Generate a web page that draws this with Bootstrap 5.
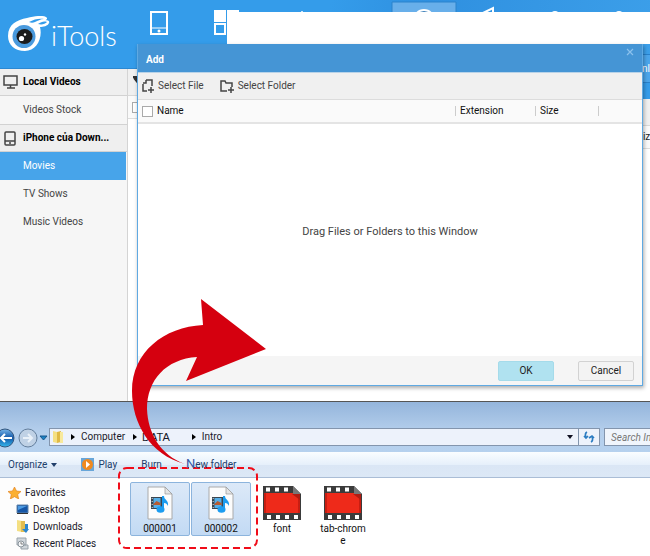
<!DOCTYPE html>
<html lang="en">
<head>
<meta charset="utf-8">
<meta name="viewport" content="width=device-width, initial-scale=1">
<title>iTools</title>
<link href="https://cdn.jsdelivr.net/npm/bootstrap@5.3.0/dist/css/bootstrap.min.css" rel="stylesheet">
<style>
body{font-family:Roboto,"Noto Sans",sans-serif;font-size:10px;line-height:16px;color:#444;background:#fff;overflow:hidden}
svg{display:block;flex:none}
a{color:inherit;text-decoration:none}
button{font:inherit;color:inherit;border:0;background:none;padding:0;white-space:nowrap}
.topbar{height:69px;background:linear-gradient(100deg,#349cea,#349cea 50%,#2f90e0 65%,#3c9fe9);border-bottom:1px solid #2b88d2}
.brand-mark{margin:16px 0 0 8px}
.brand-name{font:300 27px/32px Lato,sans-serif;color:#fff;margin-top:20px}
.cover{position:absolute;left:227px;right:0;top:12px;height:32px;background:#fff}
.side{width:128px;min-height:332px;background:#f6f6f6;border-right:1px solid #d4d4d4}
.side a{display:flex;align-items:center;height:28px;padding-left:23px;white-space:nowrap}
.side .group{background:#efefef;border-bottom:1px solid #d2d2d2;height:27px;padding-left:3px;gap:4px;color:#000;font-weight:700}
.side .group svg{width:16px}
.side .line-above{border-top:1px solid #d2d2d2;height:28px}
.side .current{background:#47a4ea;color:#fff;margin-right:1px}
.band{background:#f0f0f0;height:27px;border-bottom:1px solid #d8d8d8}
.band-head{background:#fafafa;height:23px;border-bottom:1px solid #ddd}
.strip{width:13px;margin-top:-15px;position:relative;white-space:nowrap}
.strip-top{height:45px;background:#349cea;color:#fff}
.strip-top div{height:29px;padding-left:5px;background:#4ba5eb;border:solid #2881cb;border-width:1px 0}
.dialog-box{position:absolute;left:137px;right:7px;top:44px;background:#fff;border:1px solid #5fa9e2;border-top:0;box-shadow:1px 2px 4px #0005}
.dialog-title{height:29px;background:#4595d5;color:#fff;border-bottom:1px solid #b9d3e8}
.dialog-tools{height:27px;background:#f0f0f0;border-bottom:1px solid #dcdcdc}
.dialog-tools button{display:flex;align-items:center;gap:4px}
.dialog-table{width:100%;table-layout:fixed;color:#111}
.dialog-table th{font-weight:400;height:23px;padding:0 0 0 4px;background:#fafafa;border-bottom:2px solid #e4e4e4;position:relative}
.dialog-table th+th::before{content:"";position:absolute;left:-1px;top:6px;height:10px;border-left:1px solid #ccc}
.dialog-table input,.mini-check{appearance:none;width:11px;height:11px;margin:0;border:1px solid #aaa;background:#fff}
.dropzone{min-height:232px;font-size:11px;padding-bottom:16px}
.dialog-foot{height:29px;background:#f5f5f5;padding-right:8px;gap:24px}
.dialog-foot button{width:56px;height:20px;border:1px solid #d2d2d2;border-radius:2px;background:#f3f3f3;color:#222}
.dialog-foot .ok-btn{background:#b0e2f0;border-color:#a5dbea}
.explorer{background:linear-gradient(#94b5dc,#b5cfec 30px,#b6d1ee 50px);border-top:1px solid #555;color:#1a1a2a}
.address-row{padding-top:26px;height:50px}
.address{height:18px;background:#edf2fb;border:1px solid #8395ad;white-space:nowrap}
.folder-name{font:11px/16px "Liberation Sans",sans-serif}
.address-tail{border-left:1px solid #8395ad;width:21px;height:16px}
.search{width:46px;overflow:hidden}
.search input{width:120px;height:18px;border:1px solid #8395ad;background:#f0f5fc;font:italic 10px Roboto,"Noto Sans",sans-serif;padding:0 6px;border-radius:0}
.search input::placeholder{color:#777;opacity:1}
.command{height:26px;background:linear-gradient(#fafdff,#e6f0fb 50%,#dae6f5 51%,#dce8f6);border-bottom:1px solid #aabdd6;color:#22406b}
.new-btn{position:relative;z-index:2}
.new-btn::first-letter{font-size:13px;color:#3557a5}
.files{background:#fff;min-height:79px}
.places{width:120px;background:#fdfdfd;padding:6px 0 0 8px}
.places a{display:flex;align-items:center;gap:4px;height:17px;white-space:nowrap}
.places .child{padding-left:8px}
.file-list{gap:1px;padding:4px 0 0 10px}
.file{width:60px;min-height:54px;padding:0 5px;border:1px solid transparent;text-align:center;line-height:12px;color:#111;overflow-wrap:anywhere;word-break:break-all}
.file svg{margin:3px auto 3px}
.file .film-icon{margin-left:5px}
.picked{border-color:#8cb4dd;border-radius:2px;background:linear-gradient(#dce9f8,#c2daf4)}
.overlay{position:absolute;left:0;top:0;pointer-events:none}
</style>
<script src="https://cdn.jsdelivr.net/npm/bootstrap@5.3.0/dist/js/bootstrap.bundle.min.js"></script>
</head>
<body>
<svg width="0" height="0" class="position-absolute" aria-hidden="true">
 <defs>
 <symbol id="media" viewBox="0 0 26 34"><path d="M1 1h17l7 7v25H1z" fill="#fcfcfc" stroke="#aaa"/><path d="M18 1v7h7z" fill="#e5e5e5" stroke="#999" stroke-width=".7"/><path d="M4 11h12v12H4z" fill="#3a4650"/><path d="M6.500 12h7v10h-7z" fill="#56aee6"/><path d="M6.500 18l3-3 4 2v2h-7z" fill="#b75b31"/><path d="M5.200 12v11" stroke="#ddd" stroke-dasharray="1 2"/><path d="M15 10h2c0 4 5 4 4 10-1-2-2-3-4-3v6h-2z" fill="#1b9cf0"/><ellipse cx="13.500" cy="23.500" rx="4" ry="3.200" fill="#1b9cf0"/></symbol>
 <symbol id="film" viewBox="0 0 38 34"><path d="M0 0h30l8 8v26H0z" fill="#3b3b3b"/><path d="M1 7h36v20H1z" fill="#ee2a1a"/><path d="M1 7h2v20H1zM35 8h2v19h-2z" fill="#c81e12"/><path d="M30 0l8 8h-8z" fill="#777"/><path d="M29 8h8v6z" fill="#b01c12"/><path d="M3 1.500h4v4H3zM12 1.500h4v4h-4zM21 1.500h4v4h-4zM4 29h4v4H4zM13 29h4v4h-4zM22 29h4v4h-4zM31 29h4v4h-4z" fill="#fff"/></symbol>
 </defs>
</svg>
<div class="position-relative">
<header class="topbar position-relative overflow-hidden">
 <div class="d-flex align-items-start">
  <svg width="43" height="36" viewBox="0 0 43 36" class="brand-mark"><path d="M0 20C0 8 9 4 19 2 27 0 34-1 38 1c2 1 1 3-1 3 3 0 5 1 4 3-1 3-6 4-9 4 3 12-4 24-15 24C7 35 0 29 0 20z" fill="#fff"/><circle cx="16" cy="20.500" r="11.500" fill="#4a9add"/><ellipse cx="16.500" cy="20.500" rx="8" ry="7.500" fill="#1b1b1b"/><circle cx="13.500" cy="22.500" r="2.600" fill="#fff"/><circle cx="17" cy="18.500" r="1.200" fill="#fff"/><path d="M21 6c5-3 11-4 15-3-4 0-6 2-9 3-2 1-4 1-6 0zM30 8c3-2 6-3 9-2-2 2-5 3-9 2z" fill="#349cea"/></svg>
  <span class="brand-name">iTools</span>
 </div>
 <svg class="overlay" width="650" height="68" viewBox="0 0 650 68"><g fill="none" stroke="#fff" stroke-width="2"><rect x="151" y="12" width="16" height="22"/><path d="M151 28h16" stroke-width="1"/><rect x="215" y="24" width="10" height="10"/></g><circle cx="159" cy="31" r="1.500" fill="#fff"/><path d="M214 10h12v12h-12zM227 10h12v3h-12z" fill="#fff"/><path d="M392 2h64v42h-64z" fill="#68afea" stroke="#2b83cc"/><circle cx="424" cy="20" r="10" fill="#3b7eb8" stroke="#fff" stroke-width="2"/><path d="M483 13l10-5v6" fill="none" stroke="#fff" stroke-width="2"/><circle cx="555" cy="15" r="4" fill="#fff"/><circle cx="619" cy="15" r="4" fill="#fff"/><circle cx="302" cy="12" r="1" fill="#fff"/></svg>
 <div class="cover"></div>
</header>
<div class="d-flex">
 <nav class="side flex-shrink-0" aria-label="Library">
  <a href="#" class="group"><svg height="14" viewBox="0 0 16 14" fill="none" stroke="#444" stroke-width="1.500"><path d="M1 1h13v9H1zM7.500 10v3M4 13h8"/></svg>Local Videos</a>
  <a href="#">Videos Stock</a>
  <a href="#" class="group line-above"><svg height="15" viewBox="0 0 16 15" fill="none" stroke="#444" stroke-width="1.500"><rect x="2" y="1" width="10" height="13" rx="1"/><path d="M2 10h10M6 12h2"/></svg>iPhone của Down...</a>
  <a href="#" class="current">Movies</a>
  <a href="#">TV Shows</a>
  <a href="#">Music Videos</a>
 </nav>
 <main class="flex-grow-1 d-flex justify-content-between">
  <div class="flex-grow-1"><div class="band"><svg width="10" height="20" viewBox="0 0 10 20"><path d="M5 8h5M6 9l4 5M8 8v4" stroke="#333" stroke-width="2"/></svg></div><div class="band-head d-flex align-items-center ps-1"><span class="mini-check"></span></div></div>
  <div class="strip"><div class="strip-top"><div class="d-flex align-items-center">nl</div></div><div class="band"></div><div class="band-head text-dark d-flex align-items-center">Siz</div></div>
 </main>
</div>

<section class="dialog-box" role="dialog" aria-label="Add">
 <div class="dialog-title d-flex justify-content-between"><strong class="ps-2 pt-1 mt-1">Add</strong><button class="align-self-start pe-2" aria-label="Close"><svg width="8" height="8" viewBox="0 0 8 8" class="mt-1"><path d="M1 1l6 6M7 1L1 7" stroke="#8bc1ed" stroke-width="1.200"/></svg></button></div>
 <div class="dialog-tools d-flex align-items-center ps-1 gap-3">
  <button><svg width="12" height="14" viewBox="0 0 12 14" fill="none" stroke="#444" stroke-width="1.500"><path d="M5 12H1V5M4 1h6v6M4 1v3H1M9 8v6M6 11h6"/></svg>Select File</button>
  <button><svg width="14" height="13" viewBox="0 0 14 13" fill="none" stroke="#444" stroke-width="1.500"><path d="M7 11H1V1h4l1 2h6v4M11 7v6M8 10h6"/></svg>Select Folder</button>
 </div>
 <table class="dialog-table"><colgroup><col><col style="width:80px"><col style="width:63px"><col style="width:43px"></colgroup><thead><tr><th><label class="d-flex align-items-center gap-1"><input type="checkbox">Name</label></th><th>Extension</th><th>Size</th><th aria-label="More"></th></tr></thead></table>
 <div class="dropzone d-flex align-items-center justify-content-center">Drag Files or Folders to this Window</div>
 <div class="dialog-foot d-flex align-items-center justify-content-end"><button class="ok-btn">OK</button><button>Cancel</button></div>
</section>

<section class="explorer">
 <div class="address-row d-flex">
  <svg width="49" height="20" viewBox="0 0 49 20"><defs><linearGradient id="bl" x2="0" y2="1"><stop stop-color="#78b5e9"/><stop offset=".5" stop-color="#1257a8"/><stop offset="1" stop-color="#36b9ee"/></linearGradient></defs><circle cx="5" cy="10" r="9" fill="url(#bl)" stroke="#33557c"/><path d="M12 10H1M5 6l-4 4 4 4" fill="none" stroke="#fff" stroke-width="2"/><circle cx="28" cy="10" r="9" fill="#bfd1e5" stroke="#637e9c"/><path d="M23 10h9M28 6l4 4-4 4" fill="none" stroke="#e9f1f9" stroke-width="2"/><path d="M40 8h7l-3.500 4z" fill="#1d83c4" stroke="#17568c"/></svg>
  <div class="address flex-grow-1 d-flex align-items-center">
   <svg width="27" height="14" viewBox="0 0 27 14"><path d="M3 1l4 1v11l-4-1z" fill="#f4df82"/><path d="M7 2l4-1v11l-4 1z" fill="#dfb945"/><path d="M10 2h3v11h-3z" fill="#f8e99c"/><path d="M21 4l4 3-4 3z"/></svg>
   <span class="ms-1">Computer</span><svg width="17" height="10" viewBox="0 0 17 10"><path d="M8 2l4 3-4 3z"/></svg><span class="folder-name">DATA</span><svg width="32" height="10" viewBox="0 0 32 10"><path d="M22 2l4 3-4 3z"/></svg><span>Intro</span>
   <svg class="ms-auto me-1" width="8" height="8" viewBox="0 0 8 8"><path d="M1 2h6L4 6z" fill="#112"/></svg>
   <button class="address-tail" aria-label="Refresh"><svg class="mx-auto" width="12" height="12" viewBox="0 0 12 12" fill="none" stroke="#2b7cc2" stroke-width="1.700"><path d="M4 1c-2 1-2 3-1 6M1 5l2 2 2-2M8 11c2-1 2-3 1-6M6 7l3-2 2 2"/></svg></button>
  </div>
  <div class="search ms-1 flex-shrink-0"><input type="search" placeholder="Search Intro" aria-label="Search Intro"></div>
 </div>
 <div class="command d-flex align-items-center">
  <button class="ms-2 d-flex align-items-center gap-1">Organize<svg width="6" height="4" viewBox="0 0 6 4"><path d="M0 0h6L3 4z" fill="#22406b"/></svg></button>
  <button class="ms-4 d-flex align-items-center gap-1"><svg width="13" height="13" viewBox="0 0 13 13"><path d="M0 0h13v13H0z" fill="#68a6d9"/><circle cx="6.500" cy="6.500" r="5.500" fill="#f08a20"/><path d="M5 3l4 3.500L5 10z" fill="#fff"/></svg>Play</button>
  <button class="ms-4">Burn</button><button class="ms-4 new-btn">New folder</button>
 </div>
 <div class="files d-flex">
  <nav class="places flex-shrink-0" aria-label="Places">
   <a href="#"><svg width="13" height="12" viewBox="0 0 13 12"><path d="M6.500 0l2 4 4.500.5-3.300 3 1 4.500-4.200-2.300L2.300 12l1-4.500L0 4.500 4.500 4z" fill="#fbb034" stroke="#e07a16" stroke-width=".6"/></svg>Favorites</a>
   <a href="#" class="child"><svg width="13" height="11" viewBox="0 0 13 11"><path d="M1 1h11v8H1z" fill="#1556a7" stroke="#6286ac"/><path d="M2 2h9L2 6z" fill="#4d9be3"/><path d="M1 9.500h11" stroke="#333"/></svg>Desktop</a>
   <a href="#" class="child"><svg width="13" height="13" viewBox="0 0 13 13"><path d="M1 0l5 1v11l-5-1z" fill="#f4df82"/><path d="M5 1h4v11H5z" fill="#e2bd50"/><path d="M9 4v5H6l4 4 3-4h-1V4z" fill="#2a86d0"/></svg>Downloads</a>
   <a href="#" class="child"><svg width="13" height="13" viewBox="0 0 13 13"><path d="M1 1h9v7H1zM5 8h7v4H5z" fill="#cfd5da" stroke="#99a3ab"/><circle cx="5" cy="7" r="3" fill="#f4f6f8" stroke="#8a949b"/><path d="M5 5v2h2" stroke="#555" fill="none" stroke-width=".7"/></svg>Recent Places</a>
  </nav>
  <div class="file-list d-flex align-items-start">
   <div class="file picked"><svg width="26" height="34"><use href="#media"/></svg>000001</div>
   <div class="file picked"><svg width="26" height="34"><use href="#media"/></svg>000002</div>
   <div class="file"><svg class="film-icon" width="38" height="34"><use href="#film"/></svg>font</div>
   <div class="file"><svg class="film-icon" width="38" height="34"><use href="#film"/></svg>tab-chrome</div>
  </div>
 </div>
</section>
<svg class="overlay" width="300" height="556" viewBox="0 0 300 556" aria-hidden="true"><path d="M201 299L266 349L186 381L197 357C166 359 147 380 147 409C148 433 160 455 185 464C150 455 132 423 132 391C132 352 164 327 203 325Z" fill="#d5000f"/><rect x="119" y="468" width="138" height="80" rx="8" fill="none" stroke="#f00c19" stroke-width="2" stroke-dasharray="7 4"/></svg>
</div>
</body>
</html>
